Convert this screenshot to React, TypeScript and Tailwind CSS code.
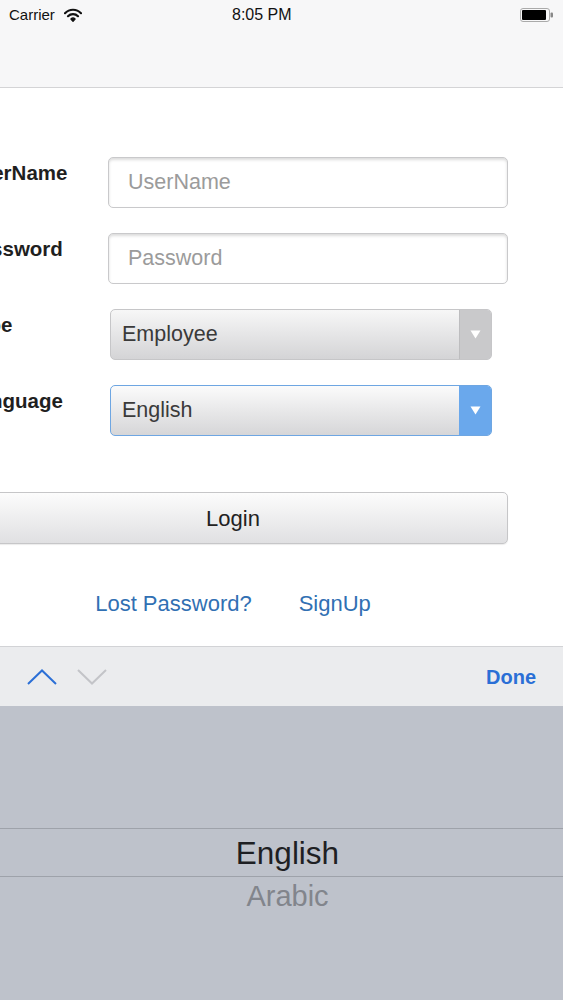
// Login screen with iOS picker keyboard
import React from 'react'

const Wifi = () => (
  <svg width="18" height="14" viewBox="0 0 18 14" className="ml-[9px]">
    <path d="M1 5.2 A11 11 0 0 1 17 5.2" fill="none" stroke="#111" strokeWidth="2.2" strokeLinecap="round" />
    <path d="M4 8.2 A7 7 0 0 1 14 8.2" fill="none" stroke="#111" strokeWidth="2.2" strokeLinecap="round" />
    <path d="M6.9 11 A3 3 0 0 1 11.1 11 L9 13.4 Z" fill="#111" stroke="#111" strokeWidth="1.2" strokeLinejoin="round" />
  </svg>
)

const Battery = () => (
  <svg width="34" height="14" viewBox="0 0 34 14">
    <rect x="0.5" y="0.5" width="29" height="13" rx="2.5" fill="none" stroke="#aaa" strokeWidth="1" />
    <rect x="2" y="2" width="24" height="10" rx="1" fill="#000" />
    <rect x="30.5" y="4.5" width="2.5" height="5" rx="1" fill="#888" />
  </svg>
)

const Label = ({ children }: { children: React.ReactNode }) => (
  <div className="pl-[8px] pt-[4px] text-[20.5px] leading-[23px] font-bold text-[#1f1f1f] whitespace-nowrap">
    {children}
  </div>
)

const TextField = ({ placeholder }: { placeholder: string }) => (
  <div className="w-[400px] h-[51px] rounded-[5px] border border-[#c9c9cb] bg-white shadow-[inset_0_2px_3px_rgba(0,0,0,0.14)] flex items-center pl-[19px]">
    <span className="text-[21.5px] text-[#9b9b9b]">{placeholder}</span>
  </div>
)

const Select = ({ value, active }: { value: string; active?: boolean }) => (
  <div
    className={
      active
        ? 'w-[382px] h-[51px] rounded-[5px] border border-[#6ea6e2] bg-gradient-to-b from-[#fbfbfb] to-[#d6d6d8] flex overflow-hidden'
        : 'w-[382px] h-[51px] rounded-[5px] border border-[#c6c6c8] bg-gradient-to-b from-[#f7f7f7] to-[#d4d4d6] flex overflow-hidden'
    }
  >
    <div className="flex-1 flex items-center pl-[11px] text-[21.5px] text-[#3a3a3a]">{value}</div>
    <div
      className={
        active
          ? 'w-[32px] bg-[#6aa8ec] flex items-center justify-center'
          : 'w-[32px] bg-[#c9c9cb] border-l border-[#bdbdbf] flex items-center justify-center'
      }
    >
      <svg width="11" height="9" viewBox="0 0 11 9">
        <path d="M0.5 0.5 H10.5 L5.5 8.5 Z" fill="#fff" />
      </svg>
    </div>
  </div>
)

export default function App() {
  return (
    <div className="w-[563px] h-[1000px] overflow-hidden flex flex-col font-['Liberation_Sans',Arial,sans-serif]">
      {/* status + nav bar */}
      <div className="h-[88px] shrink-0 bg-[#f7f7f8] border-b border-[#d4d4d6]">
        <div className="h-[30px] flex items-center text-[#111]">
          <div className="w-[232px] pl-[9px] flex items-center">
            <span className="text-[15px]">Carrier</span>
            <Wifi />
          </div>
          <span className="text-[16px]">8:05 PM</span>
          <div className="flex-1 flex justify-end pr-[9px]">
            <Battery />
          </div>
        </div>
      </div>

      {/* form */}
      <div className="flex-1 bg-white overflow-hidden">
        <div className="-ml-[42px] w-[550px] pt-[69px] flex flex-col">
          <div className="grid grid-cols-[150px_1fr] gap-y-[25px]">
            <Label>UserName</Label>
            <TextField placeholder="UserName" />
            <Label>Password</Label>
            <TextField placeholder="Password" />
            <Label>Type</Label>
            <div className="pl-[2px]">
              <Select value="Employee" />
            </div>
            <Label>Language</Label>
            <div className="pl-[2px]">
              <Select value="English" active />
            </div>
          </div>

          <button className="mt-[56px] h-[52px] w-[550px] rounded-[5px] border border-[#c6c6c8] bg-gradient-to-b from-[#fcfcfc] to-[#e0e0e2] shadow-[0_1px_1px_rgba(0,0,0,0.08)] text-[22px] text-[#222]">
            Login
          </button>

          <div className="mt-[43px] flex justify-center gap-[47px] text-[22px] text-[#3170b3]">
            <span>Lost Password?</span>
            <span>SignUp</span>
          </div>
        </div>
      </div>

      {/* keyboard accessory */}
      <div className="h-[60px] shrink-0 bg-[#ebecee] border-t border-[#d2d3d6] flex items-center pl-[27px] pr-[27px]">
        <svg width="30" height="16" viewBox="0 0 30 16">
          <path d="M1 15 L15 1.5 L29 15" fill="none" stroke="#2b6fd6" strokeWidth="2" />
        </svg>
        <svg width="30" height="16" viewBox="0 0 30 16" className="ml-[20px]">
          <path d="M1 1 L15 14.5 L29 1" fill="none" stroke="#c3c4c8" strokeWidth="2" />
        </svg>
        <span className="ml-auto text-[20px] font-bold text-[#2a6fd6]">Done</span>
      </div>

      {/* picker */}
      <div className="h-[294px] shrink-0 bg-[#bec2cb] flex flex-col pt-[122px] pl-[12px]">
        <div className="h-[49px] border-y border-[#9ea2aa] -ml-[12px] flex items-center justify-center pl-[12px] pt-[2px]">
          <span className="text-[31.5px] text-[#1e1f23]">English</span>
        </div>
        <div className="flex justify-center -mt-[2px]">
          <span className="text-[29px] text-[#82858c]">Arabic</span>
        </div>
      </div>
    </div>
  )
}
